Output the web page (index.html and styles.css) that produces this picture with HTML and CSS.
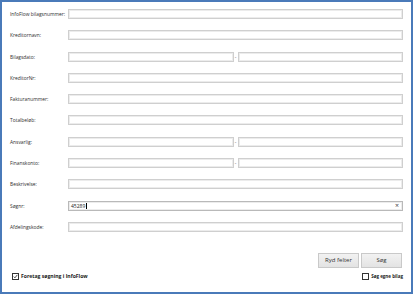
FILE: index.html
```html
<!DOCTYPE html>
<html lang="da">
<head>
    <meta charset="UTF-8">
    <title>InfoFlow søgning</title>
    <link rel="stylesheet" href="styles.css">
</head>
<body>
    <div class="window">
        <div class="form">
            <label class="lbl">InfoFlow bilagsnummer:</label>
            <div class="field"></div>

            <label class="lbl">Kreditornavn:</label>
            <div class="field"></div>

            <label class="lbl">Bilagsdato:</label>
            <div class="range">
                <div class="field"></div>
                <span class="dash">-</span>
                <div class="field"></div>
            </div>

            <label class="lbl">KreditorNr:</label>
            <div class="field"></div>

            <label class="lbl">Fakturanummer:</label>
            <div class="field"></div>

            <label class="lbl">Totalbeløb:</label>
            <div class="field"></div>

            <label class="lbl">Ansvarlig:</label>
            <div class="range">
                <div class="field"></div>
                <span class="dash">-</span>
                <div class="field"></div>
            </div>

            <label class="lbl">Finanskonto:</label>
            <div class="range">
                <div class="field"></div>
                <span class="dash">-</span>
                <div class="field"></div>
            </div>

            <label class="lbl">Beskrivelse:</label>
            <div class="field"></div>

            <label class="lbl">Søgnr:</label>
            <div class="field field-active">
                <span class="value">45289</span><span class="caret"></span>
                <span class="clear">×</span>
            </div>

            <label class="lbl">Afdelingskode:</label>
            <div class="field"></div>
        </div>

        <div class="actions">
            <button class="btn">Ryd felter</button>
            <button class="btn">Søg</button>
        </div>

        <div class="options">
            <div class="check check-main">
                <span class="box checked">
                    <svg viewBox="0 0 8 8" width="7" height="7"><path d="M1.2 4.2 L3.1 6.1 L6.9 1.4" fill="none" stroke="#222" stroke-width="1.3"/></svg>
                </span>
                <span>Foretag søgning i InfoFlow</span>
            </div>
            <div class="check check-own">
                <span class="box"></span>
                <span>Søg egne bilag</span>
            </div>
        </div>
    </div>
</body>
</html>
```

FILE: styles.css
```css
body {
    margin: 0;
    padding: 0;
    background: #ffffff;
    font-family: 'Open Sans', 'Noto Sans', sans-serif;
    color: #333;
}

.window {
    width: 413px;
    height: 294px;
    box-sizing: border-box;
    border: 2px solid #4a7ab9;
    padding: 7px 8px 0 8px;
    background: #fff;
}

.form {
    display: grid;
    grid-template-columns: 58px 1fr;
    grid-auto-rows: 10px;
    row-gap: 11.3px;
    align-items: center;
}

.lbl {
    font-size: 4.9px;
    color: #2e2e2e;
    white-space: nowrap;
    line-height: 10px;
}

.field {
    height: 10px;
    box-sizing: border-box;
    border: 1px solid #cfcfcf;
    box-shadow: inset 0 0 0 1px #ececec;
    background: #fff;
    position: relative;
    display: flex;
    align-items: center;
    padding-left: 2px;
    font-size: 5px;
    color: #222;
}

.field-active {
    border-color: #b9b9b9;
}

.caret {
    width: 1px;
    height: 6px;
    background: #000;
    margin-left: 0.5px;
}

.clear {
    position: absolute;
    right: 3px;
    top: 0;
    line-height: 8px;
    font-size: 7px;
    color: #444;
}

.range {
    display: grid;
    grid-template-columns: 1fr 4px 1fr;
    align-items: center;
    height: 10px;
}

.dash {
    font-size: 5px;
    text-align: center;
    color: #555;
    line-height: 10px;
}

.actions {
    display: flex;
    justify-content: flex-end;
    gap: 2px;
    margin-top: 21px;
    padding-right: 1px;
}

.btn {
    width: 41px;
    height: 15px;
    padding: 0;
    border: 1px solid #c9c9c9;
    background: linear-gradient(#f2f2f2, #e3e3e3);
    font-family: inherit;
    font-size: 6px;
    color: #333;
}

.options {
    display: flex;
    justify-content: space-between;
    margin-top: 5px;
    padding-left: 2px;
}

.check {
    display: flex;
    align-items: center;
    gap: 2px;
    font-size: 5.1px;
    font-weight: bold;
    color: #222;
}

.check-own {
    font-size: 4.5px;
}

.box {
    width: 7px;
    height: 7px;
    box-sizing: border-box;
    border: 1px solid #333;
    background: #fff;
    display: flex;
    align-items: center;
    justify-content: center;
}

.box svg {
    display: block;
}
```
